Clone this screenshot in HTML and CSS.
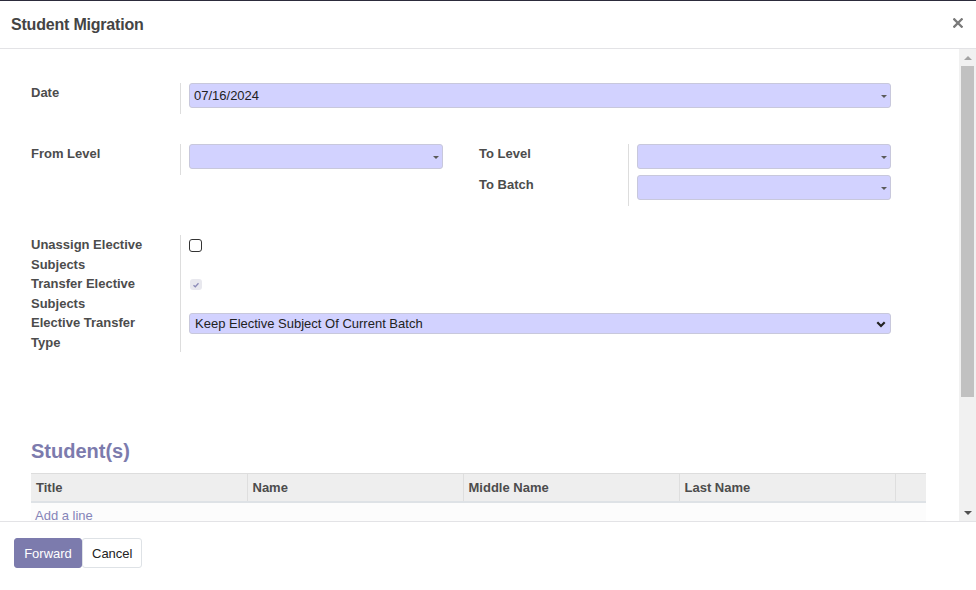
FILE: index.html
```html
<!DOCTYPE html>
<html lang="en">
<head>
<meta charset="utf-8">
<title>Student Migration</title>
<link rel="stylesheet" href="styles.css">
</head>
<body>
<div class="strip"></div>
<div class="modal">
  <header class="modal-header">
    <h4 class="modal-title">Student Migration</h4>
    <span class="close" aria-label="Close">
      <svg width="10" height="10" viewBox="0 0 10 10"><path d="M1.3 1.3 L8.7 8.7 M8.7 1.3 L1.3 8.7" stroke="#7a7a7a" stroke-width="2.3" stroke-linecap="square"/></svg>
    </span>
  </header>
  <div class="modal-main">
    <div class="modal-body">
      <div class="group">
        <div class="inner">
          <div class="lbl">Date</div>
          <div class="fld"><div class="input">07/16/2024<span class="caret"></span></div></div>
        </div>
      </div>
      <div class="group split">
        <div class="inner">
          <div class="lbl">From Level</div>
          <div class="fld"><div class="input"><span class="caret"></span></div></div>
        </div>
        <div class="inner">
          <div class="lbl">To Level</div>
          <div class="fld"><div class="input"><span class="caret"></span></div></div>
          <div class="lbl">To Batch</div>
          <div class="fld"><div class="input"><span class="caret"></span></div></div>
        </div>
      </div>
      <div class="group">
        <div class="inner tall">
          <div class="lbl">Unassign Elective Subjects</div>
          <div class="fld"><span class="checkbox"></span></div>
          <div class="lbl">Transfer Elective Subjects</div>
          <div class="fld"><span class="checkbox checked-disabled"><svg width="8" height="8" viewBox="0 0 8 8"><path d="M1.5 4.2 L3.3 5.8 L6.5 2.3" fill="none" stroke="#8c8bb8" stroke-width="1.3"/></svg></span></div>
          <div class="lbl">Elective Transfer Type</div>
          <div class="fld"><div class="input select">Keep Elective Subject Of Current Batch<svg class="chev" width="10" height="7" viewBox="0 0 10 7"><path d="M1.3 1.3 L5 5 L8.7 1.3" fill="none" stroke="#222" stroke-width="2.2"/></svg></div></div>
        </div>
      </div>
      <h3 class="section">Student(s)</h3>
      <table class="list">
        <colgroup><col class="c"><col class="c"><col class="c"><col class="c"><col class="cl"></colgroup>
        <thead>
          <tr><th>Title</th><th>Name</th><th>Middle Name</th><th>Last Name</th><th></th></tr>
        </thead>
        <tbody>
          <tr><td colspan="5"><a class="add">Add a line</a></td></tr>
        </tbody>
      </table>
    </div>
    <div class="scrollbar">
      <div class="sb-btn"><span class="tri-up"></span></div>
      <div class="sb-thumb"></div>
      <div class="sb-track"></div>
      <div class="sb-btn"><span class="tri-down"></span></div>
    </div>
  </div>
  <footer class="modal-footer">
    <button class="btn btn-primary">Forward</button><button class="btn btn-secondary">Cancel</button>
  </footer>
</div>
</body>
</html>
```
FILE: styles.css
```css
* { box-sizing: border-box; }
html, body { margin: 0; padding: 0; }
body {
  width: 976px;
  height: 590px;
  overflow: hidden;
  background: #fff;
  font-family: "Liberation Sans", Arial, sans-serif;
  font-size: 13px;
  color: #4c4c4c;
}
.strip { height: 1px; background: #2c2b3b; }
.modal { display: flex; flex-direction: column; height: 589px; }
.modal-header {
  height: 48px;
  border-bottom: 1px solid #e3e3e6;
  display: flex;
  align-items: center;
  justify-content: space-between;
  padding: 0 13px 0 11px;
}
.modal-title {
  margin: 0;
  font-size: 16px;
  font-weight: bold;
  letter-spacing: -0.2px;
  color: #444;
}
.close { display: flex; margin-top: -4px; }
.modal-main { display: flex; height: 472px; }
.modal-body {
  flex: 1;
  overflow: hidden;
  padding: 34px 0 0 31px;
}
.group { width: 860px; margin-bottom: 30px; }
.group.split {
  display: grid;
  grid-template-columns: 1fr 1fr;
  column-gap: 36px;
  align-items: start;
  margin-bottom: 29px;
}
.inner { display: grid; grid-template-columns: 150px 1fr; align-items: stretch; }
.lbl {
  border-right: 1px solid #ddd;
  font-weight: bold;
  line-height: 19.5px;
  padding-right: 18px;
}
.fld { padding: 0 0 6px 8px; }
.inner.tall .fld { padding-bottom: 0; }
.input {
  position: relative;
  height: 25px;
  background: #d2d2ff;
  border: 1px solid #c8c8dc;
  border-radius: 3px;
  display: flex;
  align-items: center;
  padding: 0 20px 0 4px;
  color: #222;
  font-size: 13px;
}
.caret {
  position: absolute;
  right: 3px;
  top: 50%;
  margin-top: -1px;
  width: 0; height: 0;
  border-left: 3.5px solid transparent;
  border-right: 3.5px solid transparent;
  border-top: 3.5px solid #5a5a5a;
}
.input.select { height: 21px; padding-left: 5px; }
.chev { position: absolute; right: 4px; top: 7px; }
.checkbox {
  display: block;
  width: 13px;
  height: 13px;
  margin-top: 4px;
  border: 1.5px solid #333;
  border-radius: 3px;
  background: #fff;
}
.checkbox.checked-disabled {
  width: 12px;
  height: 11px;
  margin: 5px 0 0 1px;
  border: none;
  background: #e8e8ee;
  display: flex;
  align-items: center;
  justify-content: center;
}
.section {
  margin: 87px 0 10px;
  font-size: 20px;
  line-height: 24px;
  font-weight: bold;
  color: #7c7bad;
}
.list {
  width: 895px;
  table-layout: fixed;
  border-collapse: collapse;
}
.list col.c { width: 216px; }
.list col.cl { width: 31px; }
.list th {
  background: #eee;
  border-top: 1px solid #ddd;
  border-left: 1px solid #dedede;
  border-bottom: 2px solid #dee2e6;
  height: 28px;
  padding: 0 5px;
  text-align: left;
  font-weight: bold;
  color: #4c4c4c;
}
.list th:first-child { border-left: none; }
.list td {
  background: #fcfcfc;
  height: 28px;
  padding: 0 4px;
  vertical-align: top;
  padding-top: 5px;
}
.add { color: #8584b8; }
.scrollbar {
  width: 17px;
  background: #f1f1f1;
  display: flex;
  flex-direction: column;
}
.sb-btn { height: 17px; display: flex; align-items: center; justify-content: center; }
.tri-up {
  width: 0; height: 0;
  border-left: 4px solid transparent;
  border-right: 4px solid transparent;
  border-bottom: 4px solid #a3a3a3;
}
.tri-down {
  width: 0; height: 0;
  border-left: 4px solid transparent;
  border-right: 4px solid transparent;
  border-top: 4px solid #505050;
}
.sb-thumb { height: 331px; margin: 0 2px; background: #c1c1c1; }
.sb-track { flex: 1; }
.modal-footer {
  flex: 1;
  border-top: 1px solid #e3e3e6;
  padding: 16px 14px;
  display: flex;
  align-items: flex-start;
}
.btn {
  height: 30px;
  font-family: "Liberation Sans", Arial, sans-serif;
  font-size: 13px;
  border-radius: 3px;
  padding: 0 9px;
  margin: 0;
  cursor: pointer;
}
.btn-primary { background: #7c7bad; border: 1px solid #7c7bad; color: #fff; width: 68px; }
.btn-secondary { background: #fff; border: 1px solid #dee2e6; color: #222; width: 60px; }
```
